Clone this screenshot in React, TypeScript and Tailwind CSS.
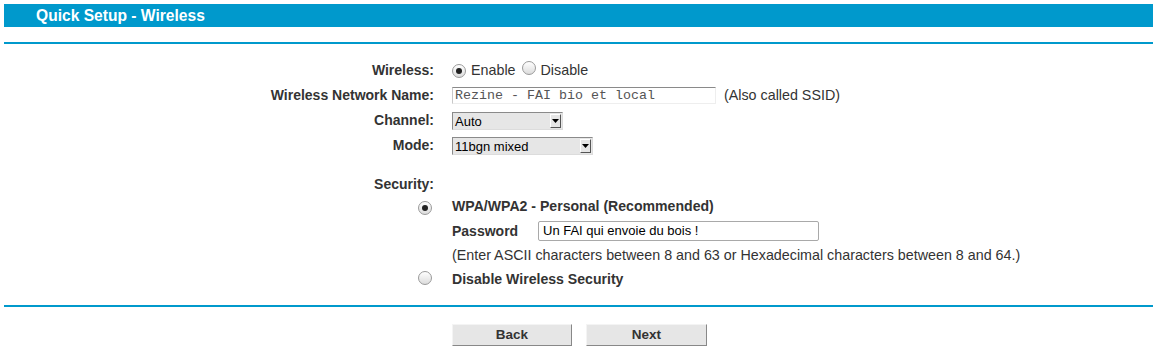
import React from "react";

const font = { fontFamily: '"Liberation Sans", Arial, sans-serif' };

function Radio({ checked }: { checked?: boolean }) {
  return (
    <span className="inline-flex h-[14px] w-[14px] items-center justify-center rounded-full border border-[#9a9a9a] bg-gradient-to-b from-[#ffffff] to-[#dcdcdc] shrink-0">
      {checked && <span className="h-[6px] w-[6px] rounded-full bg-[#222]" />}
    </span>
  );
}

function Select({ value, width }: { value: string; width: string }) {
  return (
    <div className={`flex h-[18px] ${width} items-stretch border border-t-[#8a8a8a] border-l-[#8a8a8a] border-r-[#dcdcdc] border-b-[#dcdcdc] bg-[#e6e6e6]`}>
      <span className="flex-1 pl-[2px] text-[13px] leading-[17px] text-black">{value}</span>
      <span className="my-[1px] mr-[1px] flex w-[11px] items-center justify-center border border-t-[#fff] border-l-[#fff] border-r-[#555] border-b-[#555] bg-[#e6e6e6]">
        <svg width="7" height="4" viewBox="0 0 7 4"><path d="M0 0h7L3.5 4z" fill="#000" /></svg>
      </span>
    </div>
  );
}

function Row({ label, children, h }: { label?: React.ReactNode; children?: React.ReactNode; h: string }) {
  return (
    <div className={`flex items-center ${h}`}>
      <div className="flex w-[436px] shrink-0 justify-end pr-[2px] text-[14px] font-bold text-[#333]">{label}</div>
      <div className="ml-[16px] flex items-center text-[14.3px] text-[#333]">{children}</div>
    </div>
  );
}

export default function App() {
  return (
    <div className="h-[347px] w-[1161px] overflow-hidden bg-white" style={font}>
      <div className="mx-[4px] mt-[4px] flex h-[23px] w-[1149px] items-center bg-[#0099cc] pl-[32px]">
        <span className="text-[15.6px] font-bold leading-none text-white">Quick Setup - Wireless</span>
      </div>
      <div className="mx-[4px] mt-[15px] h-[2px] w-[1149px] bg-[#0099cc]" />
      <div className="mt-[14px]">
        <Row label="Wireless:" h="h-[25px]">
          <Radio checked />
          <span className="ml-[5px]">Enable</span>
          <span className="ml-[6px]"><Radio /></span>
          <span className="ml-[5px]">Disable</span>
        </Row>
        <Row label="Wireless Network Name:" h="h-[25px]">
          <div className="flex h-[17px] w-[264px] items-center border border-t-[#8a8a8a] border-l-[#c8c8c8] border-r-[#eee] border-b-[#eee] bg-white pl-[2px] text-[13.33px] text-[#555]" style={{ fontFamily: '"Liberation Mono", "Courier New", monospace' }}>
            Rezine - FAI bio et local
          </div>
          <span className="ml-[8px]">(Also called SSID)</span>
        </Row>
        <Row label="Channel:" h="h-[25px]">
          <Select value="Auto" width="w-[111px]" />
        </Row>
        <Row label="Mode:" h="h-[25px]">
          <Select value="11bgn mixed" width="w-[141px]" />
        </Row>
        <div className="h-[15px]" />
        <Row label="Security:" h="h-[22px]" />
        <Row label={<span className="pr-[2px]"><Radio checked /></span>} h="h-[23px]">
          <span className="text-[14.1px] font-bold">WPA/WPA2 - Personal (Recommended)</span>
        </Row>
        <Row h="h-[26px]">
          <span className="w-[86px] text-[14px] font-bold">Password</span>
          <div className="flex h-[20px] w-[281px] items-center rounded-[2px] border border-[#a9a9a9] bg-white pl-[4px] text-[13px] text-black">
            Un FAI qui envoie du bois !
          </div>
        </Row>
        <Row h="h-[24px]">
          <span>(Enter ASCII characters between 8 and 63 or Hexadecimal characters between 8 and 64.)</span>
        </Row>
        <Row label={<span className="pr-[2px]"><Radio /></span>} h="h-[24px]">
          <span className="text-[14.1px] font-bold">Disable Wireless Security</span>
        </Row>
      </div>
      <div className="mx-[4px] mt-[13px] h-[2px] w-[1149px] bg-[#0099cc]" />
      <div className="mt-[17px] flex gap-[14px] pl-[452px]">
        <button className="h-[22px] w-[120px] border border-t-[#f4f4f4] border-l-[#f4f4f4] border-r-[#888] border-b-[#888] bg-[#e6e6e6] text-[13.5px] font-bold text-[#333]">Back</button>
        <button className="h-[22px] w-[121px] border border-t-[#f4f4f4] border-l-[#f4f4f4] border-r-[#888] border-b-[#888] bg-[#e6e6e6] text-[13.5px] font-bold text-[#333]">Next</button>
      </div>
    </div>
  );
}
